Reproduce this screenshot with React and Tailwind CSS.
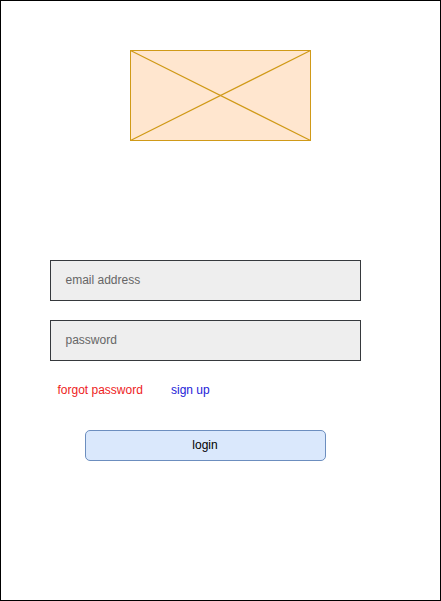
export default function App() {
  return (
    <div className="w-[441px] h-[601px] border border-black bg-white flex flex-col font-['Liberation_Sans',Arial,sans-serif] text-xs leading-[14px]">
      <svg className="block shrink-0 ml-[129px] mt-[49px]" width="181" height="91" viewBox="0 0 181 91" fill="none" stroke="#d09a18">
        <rect x="0.5" y="0.5" width="180" height="90" fill="#ffe6cf" />
        <path d="M0.5 0.5L180.5 90.5M180.5 0.5L0.5 90.5" strokeWidth="1.15" />
      </svg>
      <div className="mt-[119px] ml-[49px] w-[311px] flex flex-col gap-[19px] text-[#666666]">
        <div className="h-[41px] border border-[#36393d] bg-[#eeeeee] flex items-center pl-[14.5px] pb-px">email address</div>
        <div className="h-[41px] border border-[#36393d] bg-[#eeeeee] flex items-center pl-[14.5px] pb-px">password</div>
      </div>
      <div className="mt-[22px] ml-[56.5px] flex">
        <span className="w-[113.5px] text-[#ee1c1c]">forgot password</span>
        <span className="text-[#1c1cd8]">sign up</span>
      </div>
      <button className="mt-[33px] ml-[84px] w-[241px] h-[31px] rounded-[5px] border border-[#6c8ebf] bg-[#dae8fc] flex items-center justify-center pb-px pr-px text-black">login</button>
    </div>
  );
}
